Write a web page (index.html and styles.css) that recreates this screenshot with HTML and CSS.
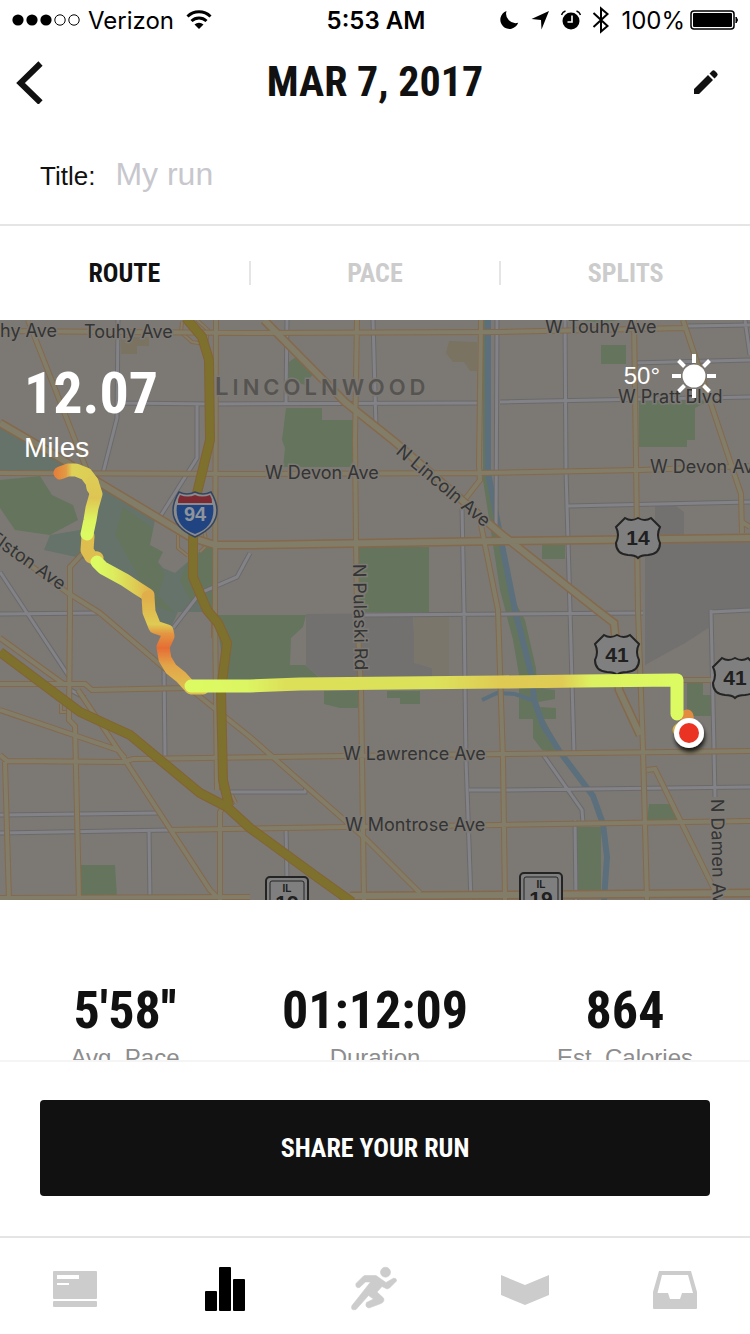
FILE: index.html
```html
<!DOCTYPE html>
<html lang="en">
<head>
<meta charset="utf-8">
<meta name="viewport" content="width=device-width, initial-scale=1">
<title>Mar 7, 2017</title>
<link rel="stylesheet" href="styles.css">
</head>
<body>
<div class="status">
  <div class="status-side">
    <svg class="signal" width="68" height="14" viewBox="0 0 68 14" aria-hidden="true"><g fill="#000"><circle cx="6" cy="7" r="5.6"/><circle cx="20" cy="7" r="5.6"/><circle cx="34" cy="7" r="5.6"/></g><g fill="none" stroke="#000"><circle cx="48" cy="7" r="5.2"/><circle cx="62" cy="7" r="5.2"/></g></svg>
    <span>Verizon</span>
    <svg class="wifi" width="26" height="20" viewBox="0 0 26 20" aria-hidden="true"><g fill="none" stroke="#000" stroke-width="3"><path d="M1.500 6.500a16.500 16.500 0 0 1 23 0"/><path d="M5.500 11a11 11 0 0 1 15 0"/></g><path d="M13 19l-4.500-4.500a7 7 0 0 1 9 0z"/></svg>
  </div>
  <time class="clock">5:53 AM</time>
  <div class="status-side status-right">
    <svg width="20" height="20" viewBox="0 0 20 20" aria-hidden="true"><path d="M7.500 1A9.200 9.200 0 1 0 19.200 12.800 9.500 9.500 0 0 1 7.500 1z"/></svg>
    <svg class="arrow" width="20" height="20" viewBox="0 0 20 20" aria-hidden="true"><path d="M19 1L11.500 19.500 11 10 1.500 9z"/></svg>
    <svg width="20" height="20" viewBox="0 0 20 20" aria-hidden="true"><circle cx="10" cy="11" r="8.500"/><path d="M.5 5A6 6 0 0 1 4.500 1M15.500 1a6 6 0 0 1 4 4" fill="none" stroke="#000" stroke-width="1.500"/><path d="M11 5.500V12H6.500" fill="none" stroke="#fff" stroke-width="1.600"/></svg>
    <svg class="bt" width="18" height="28" viewBox="0 0 18 28" aria-hidden="true"><path d="M1.500 7L15.500 20 9 25.500V2.500L15.500 8 1.500 21" fill="none" stroke="#000" stroke-width="2"/></svg>
    <span class="percent">100%</span>
    <svg class="battery" width="50" height="20" viewBox="0 0 50 20" aria-hidden="true"><rect x="1" y="1" width="43" height="18" rx="3" fill="none" stroke="#000" stroke-width="1.500"/><rect x="3" y="3" width="39" height="14" rx="1"/><path d="M46 7q3 3 0 6z" stroke="#000"/></svg>
  </div>
</div>
<header class="nav">
  <button class="icon-button" aria-label="Back"><svg width="28" height="44" viewBox="0 0 28 44"><path d="M24.500 3.500L4.500 23l20 19.500" fill="none" stroke="#111" stroke-width="6"/></svg></button>
  <h1 class="nav-title">MAR 7, 2017</h1>
  <button class="icon-button icon-end" aria-label="Edit"><svg width="26" height="26" viewBox="0 0 26 26"><path fill="#111" d="M1 20L15 6l5 5L6 25H1zM16.500 4.500l2.500-2.500q1.500-1.500 3 0l2 2q1.500 1.500 0 3L21.500 9.500z"/></svg></button>
</header>
<main class="content">
  <div class="title-row">
    <label class="title-label" for="run-title">Title:</label>
    <input class="title-input" id="run-title" type="text" placeholder="My run">
  </div>
  <div class="tabs" role="tablist">
    <button class="tab tab-active" role="tab" aria-selected="true">ROUTE</button>
    <button class="tab" role="tab" aria-selected="false">PACE</button>
    <button class="tab" role="tab" aria-selected="false">SPLITS</button>
  </div>
  <section class="map" aria-label="Route map">
    <svg class="map-canvas" viewBox="0 320 750 580">
      <defs>
        <path id="gray" d="M118 320L117 418 103 473M118 403L215 404 480 403M197 403V458L158 520M250 553L237 577 200 593 173 628M0 572L25 610 70 678M67 688L85 698M0 614L98 613M164 667L165 757M0 815L160 813M0 833L172 830M149 830L150 900M230 792H305L306 786M286 827L287 880M287 320L286 403M373 320L376 427M497 320L496 530M462 507L464 610 466 760 471 900M365 615L643 613M469 790H500L750 787M565 320L566 470 570 610 574 754M575 820L576 900M500 402L750 397M568 506L750 502M633 363L750 360M688 326L750 325M745 320L750 355M711 610L715 797M542 753L582 810 583 823M711 612L750 610"/>
        <path id="yellow" d="M0 331L250 333 500 332 685 328M28 320L88 473M216 320L215 610 217 790M220 900V812L226 803M357 320L355 440 356 540 357 610 361 690 364 900M481 320L479 465 480 480 466 498M0 473L250 474 480 473 640 470 750 466M0 543L68 593 100 613 163 667 250 737 367 840 420 893M83 553L70 567V610L69 720 75 726 76 770 79 900M0 638L65 685M0 684H85L92 690 187 688M78 690L123 757 210 890 217 897M0 710L118 750 125 758M0 755L7 761 123 762 133 759 345 756 500 754 750 751M5 762L9 900M170 830L345 827 500 825 750 821M0 898L250 897M634 320L636 460 638 610 643 750 647 900M683 320L692 347 741 494 742 533M742 522L750 527M683 680H711M480 520L498 610 503 760 505 900M647 770L655 769 713 887 716 893"/>
        <path id="ramps" d="M182 322L181 332 192 342 206 344 208 330 197 320M178 535V548L188 556M204 530L207 545 200 552M61 704V712H69M213 622V638M232 795L236 803"/>
        <path id="wide" d="M264 320L345 402 395 442 500 533 597 610 614 623 617 653 619 690 640 735M0 423L50 452 100 483 190 537 215 545H250L500 541 750 538M350 896L500 895 750 893"/>
        <path id="freeway" d="M186 318L202 337 209 360 210 440 197 493 193 540V577L207 610 218 623 227 643 221 690 223 780 229 806M0 652L80 712 130 735 200 793 227 807 250 828 317 877 352 902"/>
        <g id="us-shield"><path class="shield" d="M-13-20q6 4 13 0q7 4 13 0l9 9q-4 8 0 16q0 11-12 12q-7 0-10 3q-3-3-10-3q-12-1-12-12q4-8 0-16z"/></g>
        <g id="il-shield"><rect class="shield" x="-21" y="-21" width="42" height="44" rx="4"/><rect x="-17" y="-17" width="34" height="40" rx="2" fill="none" stroke="#242424"/></g>
        <linearGradient id="long" gradientUnits="userSpaceOnUse" x1="188" y1="0" x2="680" y2="0"><stop offset="0" stop-color="#dcfb62"/><stop offset=".12" stop-color="#dcf562"/><stop offset=".2" stop-color="#dcdf58"/><stop offset=".5" stop-color="#dce25b"/><stop offset=".63" stop-color="#dfcb54"/><stop offset=".76" stop-color="#dfcc55"/><stop offset=".82" stop-color="#dcf160"/><stop offset="1" stop-color="#dcfb62"/></linearGradient>
        <linearGradient id="r1" gradientUnits="userSpaceOnUse" x1="55" y1="0" x2="100" y2="0"><stop stop-color="#e57f3b"/><stop offset=".25" stop-color="#e29b45"/><stop offset=".38" stop-color="#ddd257"/><stop offset="1" stop-color="#ddcb55"/></linearGradient>
        <linearGradient id="r2" gradientUnits="userSpaceOnUse" x1="0" y1="482" x2="0" y2="536"><stop stop-color="#ddcb55"/><stop offset=".3" stop-color="#dec553"/><stop offset=".7" stop-color="#dcf35f"/><stop offset="1" stop-color="#dcfb62"/></linearGradient>
        <linearGradient id="r3" gradientUnits="userSpaceOnUse" x1="97" y1="0" x2="152" y2="0"><stop stop-color="#dcfb62"/><stop offset=".3" stop-color="#dcec5e"/><stop offset=".7" stop-color="#decb54"/><stop offset="1" stop-color="#e0ae4a"/></linearGradient>
        <linearGradient id="r4" gradientUnits="userSpaceOnUse" x1="0" y1="597" x2="0" y2="688"><stop stop-color="#e0ae4a"/><stop offset=".3" stop-color="#decb54"/><stop offset=".4" stop-color="#e39742"/><stop offset=".56" stop-color="#e66d34"/><stop offset=".75" stop-color="#e2a449"/><stop offset="1" stop-color="#dfbe50"/></linearGradient>
        <filter id="drop" x="-50%" y="-50%" width="200%" height="200%"><feDropShadow dx="1" dy="4" stdDeviation="2" flood-opacity=".8"/></filter>
      </defs>
      <rect y="320" width="750" height="580" fill="#7c7975"/>
      <g fill="#65755d">
        <path d="M0 422L82 475H0z" fill="#66736a"/>
        <path d="M98 480L120 494 158 519 205 545 217 565V612H178L165 640 148 610 130 585 90 560 44 550 50 535 80 530 93 500z" fill="#66736a"/>
        <path d="M0 480L40 476 52 495 73 505 78 520 50 535 15 530 0 508z"/>
        <path d="M123 507L155 530 150 545 163 552 158 562 165 575 158 595 175 613 150 605 135 570 115 535z"/>
        <path d="M190 556L217 540 213 610 190 600 180 580z"/>
        <path fill="#7c7975" d="M155 520L205 547 190 560 175 573 163 568 158 562 163 552 150 545z"/>
        <path d="M216 615H306L303 627 291 638 290 665H305L322 680H225z"/>
        <path d="M286 408H322V420H355V467H283L285 448 282 440z"/><path d="M289 362L296 357 313 374 305 385 289 380z"/>
        <path d="M359 547H429V612H359z"/><path d="M324 691H358V708H340L324 704z"/><path d="M387 691H420V704H400V698H387z"/>
        <path d="M601 345H626V364H601z"/><path d="M639 400L708 401 695 408V440H687V447H639z"/><path d="M542 545H565V559H542z"/>
        <path d="M81 865H115L117 897H81z"/><path d="M687 683H703V695H711V716H687z"/><path d="M649 804H672L677 820H647z"/><path d="M577 827H601V890H577z"/><path d="M580 320H620L600 323z"/>
        <path d="M483 320H489V465L500 545 514 600 525 620 536 668 537 688 555 690V699L538 702 540 707 556 708V719H544L563 754 542 750 533 738V719H519V675L513 640 500 590 483 480z"/>
      </g>
      <path fill="#73716f" d="M306 614L413 613 415 663 432 668V679H322L306 666zM645 541H750V610L713 612V625L685 643 645 665zM655 506H676L684 512V536H655z"/>
      <path fill="#7a7361" d="M449 341L477 342V371H470L464 362H453L446 353zM121 337H149V346H137V354H121z"/>
      <path fill="#7b766b" d="M414 615H449V679H432V667L414 663z"/>
      <g class="water"><path d="M488 320V472L501 540 515 610 532 677 534 700 543 725 560 752 593 796 603 824 607 857 604 900" stroke-width="6"/><path d="M482 700L497 693 515 694 532 700" stroke-width="4"/></g>
      <use href="#gray" class="gray-case"/><use href="#gray" class="gray-fill"/>
      <use href="#ramps" class="ramp-case"/><use href="#ramps" class="ramp-fill"/>
      <use href="#yellow" class="road-case"/><use href="#wide" class="wide-case"/>
      <use href="#yellow" class="road-fill"/><use href="#wide" class="wide-fill"/>
      <use href="#freeway" class="freeway-case"/><use href="#freeway" class="freeway-fill"/>
      <g class="road-name">
        <text x="0" y="337">hy Ave</text><text x="84" y="338">Touhy Ave</text><text x="545" y="333">W Touhy Ave</text>
        <text x="265" y="479">W Devon Ave</text><text x="650" y="473">W Devon Ave</text><text x="618" y="403">W Pratt Blvd</text>
        <text x="343" y="760">W Lawrence Ave</text><text x="345" y="831">W Montrose Ave</text>
        <text transform="translate(395 453) rotate(40)">N Lincoln Ave</text>
        <text transform="translate(-12 540) rotate(35)">Elston Ave</text>
        <text transform="translate(353 564) rotate(89)">N Pulaski Rd</text>
        <text transform="translate(711 799) rotate(89)">N Damen Ave</text>
      </g>
      <text class="town" x="215" y="395">L<tspan class="town-small">INCOLNWOOD</tspan></text>
      <g transform="translate(195 511)"><path d="M-16-19q8 4 16 0q8 4 16 0q12 20 0 34q-5 6-16 11q-11-5-16-11q-12-14 0-34z" fill="#8b8b8b" stroke="#334563" stroke-width="1.500"/><path d="M-18-6q-3 22 18 29q21-7 18-29z" fill="#204481"/><path d="M-17-8q0-5 2-8q8 3 15 0q7 3 15 0q2 3 2 8z" fill="#7c2932"/><text class="interstate" y="10">94</text></g>
      <g transform="translate(638 538)"><use href="#us-shield"/><text class="route-no" y="7">14</text></g>
      <g transform="translate(617 655)"><use href="#us-shield"/><text class="route-no" y="7">41</text></g>
      <g transform="translate(735 678)"><use href="#us-shield"/><text class="route-no" y="7">41</text></g>
      <g transform="translate(287 898)"><use href="#il-shield"/><text class="state" y="-6">IL</text><text class="route-no" y="12">19</text></g>
      <g transform="translate(541 894)"><use href="#il-shield"/><text class="state" y="-6">IL</text><text class="route-no" y="12">19</text></g>
      <g class="track">
        <path d="M88 536L87 550 91 557 97 558" stroke="#dfbe50"/>
        <path d="M60 473L68 470H76L86 474 92 482 93 488" stroke="url(#r1)"/>
        <path d="M92 482L96 494 92 508 90 520 87 534" stroke="url(#r2)"/>
        <path d="M97 562L103 568 125 580 137 588 148 595" stroke="url(#r3)"/>
        <path d="M148 597L149 612 155 627 167 631 168 636 163 647 165 659 171 669 181 677 191 688 203 688" stroke="url(#r4)"/>
        <path d="M684 726L679 730" stroke="#dfb64d"/><path d="M687 716L688 726" stroke="#e28c40"/>
        <path d="M191 686L250 686 300 684 500 682 580 681 677 680V714" stroke="url(#long)"/>
      </g>
      <circle cx="689" cy="733" r="15" fill="#fff" filter="url(#drop)"/><circle cx="689" cy="733" r="10" fill="#ea3323"/>
    </svg>
    <div class="map-overlay">
      <div class="distance"><strong class="distance-value">12.07</strong><span class="distance-unit">Miles</span></div>
      <div class="weather"><span>50°</span><svg width="44" height="44" viewBox="0 0 44 44" aria-label="Sunny"><circle cx="22" cy="22" r="11.500" fill="#fff"/><path d="M22 0V9M22 35V44M0 22H9M35 22H44M6.500 6.500L12.500 12.500M31.500 31.500L37.500 37.500M37.500 6.500L31.500 12.500M12.500 31.500L6.500 37.500" stroke="#fff" stroke-width="4"/></svg></div>
    </div>
  </section>
  <dl class="stats">
    <div class="stat"><dd class="stat-value">5'58''</dd><dt class="stat-label">Avg. Pace</dt></div>
    <div class="stat"><dd class="stat-value">01:12:09</dd><dt class="stat-label">Duration</dt></div>
    <div class="stat"><dd class="stat-value">864</dd><dt class="stat-label">Est. Calories</dt></div>
  </dl>
</main>
<div class="share-bar"><button class="share">SHARE YOUR RUN</button></div>
<nav class="tabbar" aria-label="Main">
  <a class="tabbar-link" href="#feed" aria-label="Feed"><svg width="48" height="48" viewBox="0 0 48 48"><path fill="#ccc" fill-rule="evenodd" d="M3 6q-1 0-1 1V33q0 1 1 1H45q1 0 1-1V7q0-1-1-1zM6 10H28V14H6zM6 18H18V20H6z"/><rect x="2" y="36" width="44" height="6" rx="1" fill="#ccc"/></svg></a>
  <a class="tabbar-link" href="#activity" aria-label="Activity" aria-current="page"><svg width="48" height="48" viewBox="0 0 48 48"><rect x="4" y="26" width="12" height="20" rx="1"/><rect x="18" y="2" width="12" height="44" rx="1"/><rect x="32" y="14" width="12" height="32" rx="1"/></svg></a>
  <a class="tabbar-link" href="#run" aria-label="Run"><svg width="48" height="48" viewBox="0 0 48 48"><g fill="#ccc" stroke="#ccc" stroke-width=".6"><circle cx="34.500" cy="7.200" r="5"/><path d="M14 10.500H25L35 17.500 42.500 13.200Q46 13 45.500 16L38.500 23 36 24 31 21.500 26 27 32.500 33Q34 37 30 38.500L18 43Q13.500 42 15.500 37.500L22.500 34 17.500 30.500 5 44.500Q-1 46 1 40.500L19.500 17H14.500L8.500 22.500Q4 23.500 5 18.500L11.500 12Q12.500 10.500 14 10.500z"/></g></svg></a>
  <a class="tabbar-link" href="#club" aria-label="Club"><svg width="48" height="48" viewBox="0 0 48 48"><path fill="#ccc" d="M0 10L24 20 48 10V30L24 40 0 30z"/></svg></a>
  <a class="tabbar-link" href="#inbox" aria-label="Inbox"><svg width="48" height="48" viewBox="0 0 48 48"><path fill="#ccc" fill-rule="evenodd" d="M8 6H40L46 27V43q0 1-1 1H3q-1 0-1-1V27zM11 10L6.500 28H17L19 34H29L31 28H42L37 10z"/></svg></a>
</nav>
</body>
</html>
```
FILE: styles.css
```css
* { box-sizing: border-box; }

body {
  margin: 0;
  height: 100vh;
  display: flex;
  flex-direction: column;
  background: #fff;
  color: #111;
  font-family: "Liberation Sans", sans-serif;
}

button {
  border: 0;
  padding: 0;
  background: none;
  color: inherit;
  font: inherit;
}

.status {
  display: grid;
  grid-template-columns: 1fr auto 1fr;
  align-items: center;
  height: 40px;
  padding: 0 10px 0 12px;
  color: #000;
  font: 24px "Inter", sans-serif;
}
.status-side { display: flex; align-items: center; gap: 8px; }
.wifi { margin-left: 4px; }
.clock { font-weight: 600; }
.status-right { justify-content: flex-end; gap: 11px; }
.battery { margin-left: -6px; }

.nav {
  display: grid;
  grid-template-columns: 1fr auto 1fr;
  align-items: center;
  height: 88px;
  padding: 0 16px 4px;
}
.icon-button { display: flex; }
.icon-end { justify-self: end; padding-right: 15px; }
.nav-title {
  margin: 0;
  font: bold 42px/56px "Liberation Sans Narrow", "Roboto Condensed", sans-serif;
}

.content {
  flex: 1;
  min-height: 0;
  overflow-y: auto;
  scrollbar-width: none;
}

.title-row {
  display: flex;
  align-items: baseline;
  gap: 20px;
  height: 98px;
  padding: 24px 40px 0;
  border-bottom: 2px solid #e5e5e5;
}
.title-label { font-size: 26px; }
.title-input {
  flex: 1;
  min-width: 0;
  border: 0;
  padding: 0;
  background: none;
  color: #111;
  font: 32px/44px "Liberation Sans", sans-serif;
}
.title-input::placeholder { color: #c7c7cd; }

.tabs { display: flex; align-items: center; height: 94px; }
.tab {
  flex: 1;
  height: 24px;
  color: #ccc;
  font: bold 26px/24px "Liberation Sans Narrow", "Roboto Condensed", sans-serif;
}
.tab + .tab { border-left: 2px solid #e5e5e5; }
.tab-active { color: #111; }

.map { position: relative; }
.map-canvas { display: block; width: 100%; height: auto; }
.map-overlay {
  position: absolute;
  inset: 0;
  display: flex;
  justify-content: space-between;
  align-items: flex-start;
  padding: 34px 34px 0 24px;
  color: #fff;
}
.distance { display: flex; flex-direction: column; }
.distance-value {
  font: bold 58px/78px "Liberation Sans Narrow", "Roboto Condensed", sans-serif;
}
.distance-unit { font-size: 28px; line-height: 32px; }
.weather { display: flex; align-items: center; gap: 12px; font-size: 24px; }

.water { fill: none; stroke: #5b707c; }
.gray-case, .gray-fill, .ramp-case, .ramp-fill, .road-case, .road-fill,
.wide-case, .wide-fill, .freeway-case, .freeway-fill { fill: none; }
.gray-case { stroke: #6b6a6b; stroke-width: 5px; }
.gray-fill { stroke: #838286; stroke-width: 3px; }
.ramp-case { stroke: #85694c; stroke-width: 4px; }
.ramp-fill { stroke: #827d68; stroke-width: 2px; }
.road-case { stroke: #85694c; stroke-width: 6px; }
.road-fill { stroke: #827d68; stroke-width: 4px; }
.wide-case { stroke: #85694c; stroke-width: 9px; }
.wide-fill { stroke: #827d68; stroke-width: 6px; }
.freeway-case { stroke: #836337; stroke-width: 10px; }
.freeway-fill { stroke: #7e702d; stroke-width: 8px; }

.road-name {
  fill: #343433;
  stroke: #7d7a76;
  stroke-width: 3px;
  paint-order: stroke;
  font: 18px "Inter", sans-serif;
}
.town {
  fill: #565451;
  stroke: #7d7a76;
  stroke-width: 3px;
  paint-order: stroke;
  font: 600 24px "Inter", sans-serif;
  letter-spacing: 4px;
}
.town-small { font-size: 22px; }
.shield { fill: #7f7f7f; stroke: #242424; stroke-width: 2px; }
.route-no { fill: #202020; text-anchor: middle; font: bold 21px "Liberation Sans", sans-serif; }
.state { fill: #202020; text-anchor: middle; font: bold 10px "Liberation Sans", sans-serif; }
.interstate { fill: #8f949c; text-anchor: middle; font: bold 20px "Liberation Sans", sans-serif; }
.track { fill: none; stroke-width: 13px; stroke-linecap: round; stroke-linejoin: round; }

.stats { display: flex; margin: 0; padding: 78px 0 40px; }
.stat { flex: 1; text-align: center; }
.stat-value {
  margin: 0;
  font: bold 52px/66px "Liberation Sans Narrow", "Roboto Condensed", sans-serif;
}
.stat-label { color: #8d8d8d; font-size: 24px; line-height: 28px; }

.share-bar { padding: 38px 40px 40px; border-top: 2px solid #f5f5f5; }
.share {
  display: block;
  width: 100%;
  height: 96px;
  border-radius: 4px;
  background: #111;
  color: #fff;
  font: bold 26px "Liberation Sans Narrow", "Roboto Condensed", sans-serif;
}

.tabbar { display: flex; height: 98px; border-top: 2px solid #e5e5e5; padding-top: 27px; }
.tabbar-link { flex: 1; display: flex; justify-content: center; }
```
